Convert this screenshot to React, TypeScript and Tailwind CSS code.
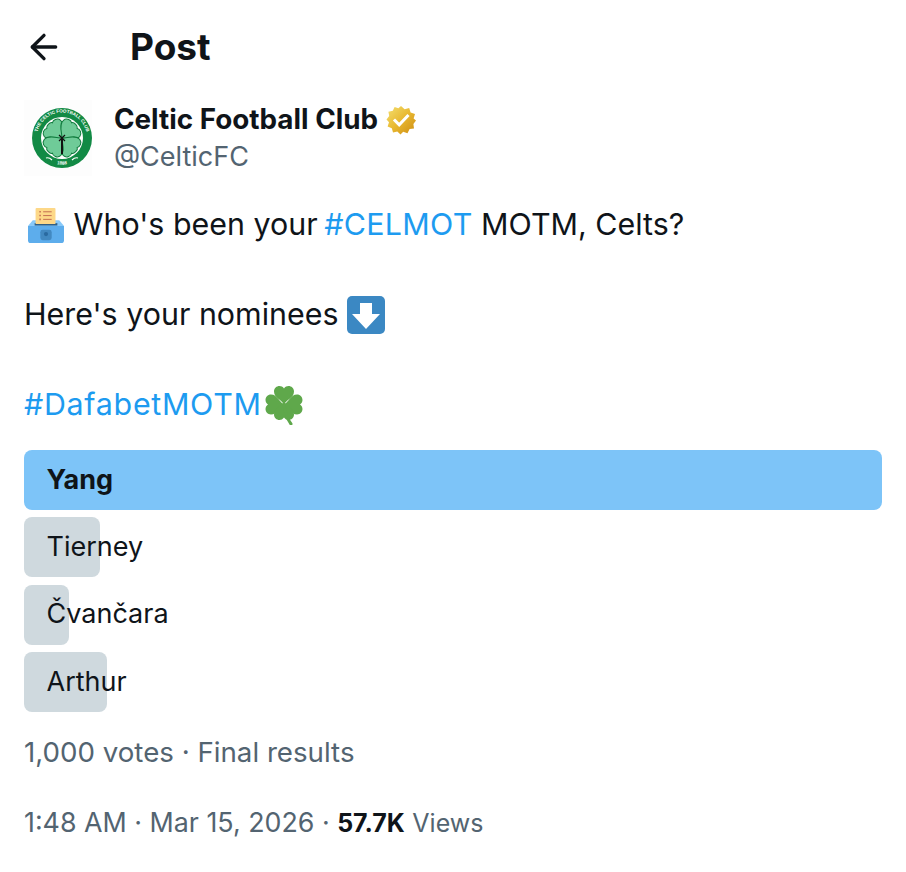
import { ArrowLeft } from 'lucide-react'

const options = [
    { label: 'Yang', width: 858, winner: true },
    { label: 'Tierney', width: 76, winner: false },
    { label: 'Čvančara', width: 45, winner: false },
    { label: 'Arthur', width: 83, winner: false },
]

function Leaf({ rotate }: { rotate: number }) {
    return (
        <path
            transform={`rotate(${rotate} 30 30)`}
            d="M30 30 C26 26 18 23 18.5 16.5 C19 12 24 11 26 12.5 C27 10 33 10 34 12.5 C36 11 41 12 41.5 16.5 C42 23 34 26 30 30 Z"
            fill="#6fcb98"
            stroke="#0f7a3c"
            strokeWidth="1"
        />
    )
}

function CelticLogo() {
    return (
        <svg viewBox="0 0 60 60" className="w-[60px] h-[60px]">
            <circle cx="30" cy="30" r="30" fill="#128a45" />
            <circle cx="30" cy="30" r="21" fill="#ffffff" />
            <defs>
                <path id="top-arc" d="M6.5 38 A25 25 0 1 1 53.5 38" />
                <path id="bottom-arc" d="M6 42 A27 27 0 0 0 54 42" />
            </defs>
            <text fontSize="4.6" fontWeight="700" fill="#ffffff" fontFamily="Liberation Sans, sans-serif" textAnchor="middle">
                <textPath href="#top-arc" startOffset="50%">THE CELTIC FOOTBALL CLUB</textPath>
            </text>
            <text fontSize="4.6" fontWeight="700" fill="#ffffff" fontFamily="Liberation Sans, sans-serif" textAnchor="middle">
                <textPath href="#bottom-arc" startOffset="50%">1888</textPath>
            </text>
            <path d="M14 50 q3 -1 6 2 M40 52 q3 -3 6 -2" stroke="#ffffff" strokeWidth="1.2" fill="none" />
            <Leaf rotate={-45} />
            <Leaf rotate={45} />
            <Leaf rotate={135} />
            <Leaf rotate={225} />
            <path d="M30 30 L30 46" stroke="#111111" strokeWidth="2" />
            <path d="M27 27 l6 6 M33 27 l-6 6" stroke="#111111" strokeWidth="1.2" />
        </svg>
    )
}

function VerifiedBadge() {
    return (
        <svg viewBox="0 0 30 30" className="w-[30px] h-[30px] shrink-0">
            <defs>
                <linearGradient id="gold" x1="0" y1="0" x2="1" y2="1">
                    <stop offset="0" stopColor="#f4e072" />
                    <stop offset="0.5" stopColor="#e8b830" />
                    <stop offset="1" stopColor="#cd8b12" />
                </linearGradient>
            </defs>
            <path
                d="M15 1 L18.6 4.2 L23.2 3 L24.6 7.5 L29 9 L27.6 13.5 L30 15.5 L27.4 19 L28 23.4 L23.6 24 L21.5 28.2 L17.2 26.8 L14.5 29.5 L11.3 26.6 L7 27.6 L5.8 23.2 L1.6 21.6 L3 17.2 L0.5 14.5 L3.2 11 L2.4 6.8 L6.8 5.8 L8.6 2 L12.4 3.2 Z"
                fill="url(#gold)"
            />
            <path d="M9 15.5 L13.2 19.8 L21.5 11" fill="none" stroke="#ffffff" strokeWidth="3" strokeLinecap="square" />
        </svg>
    )
}

function BallotEmoji() {
    return (
        <svg viewBox="0 0 40 38" className="w-[38px] h-[36px] ml-[3px] inline-block align-[-9px]">
            <path d="M1 19 L6 13 H34 L39 19 Z" fill="#88c9f9" />
            <rect x="8" y="16" width="24" height="2.5" fill="#2f5f86" />
            <rect x="9" y="0" width="21" height="17" rx="1" fill="#fdd888" />
            <path d="M13 4h1.5M13 8h1.5M13 12h1.5" stroke="#c1694f" strokeWidth="1.6" />
            <path d="M17 4h9M17 8h9M17 12h9" stroke="#c1694f" strokeWidth="1" />
            <path d="M1 19 H39 V34 Q39 37 36 37 H4 Q1 37 1 34 Z" fill="#5dadec" />
            <rect x="14" y="23" width="12" height="11" rx="2.5" fill="#4289c1" />
            <circle cx="20" cy="27.5" r="2.2" fill="#2a6aa0" />
        </svg>
    )
}

function DownEmoji() {
    return (
        <svg viewBox="0 0 38 38" className="w-[38px] h-[38px] inline-block align-[-9px]">
            <rect x="0" y="0" width="38" height="38" rx="5" fill="#3b88c3" />
            <path d="M13 7 H25 V18 H33 L19 33 L5 18 H13 Z" fill="#ffffff" />
        </svg>
    )
}

function CloverEmoji() {
    const leaf = 'M20 19.5 C18 15 10 13 10 6.5 C10 1 17 -1 20 3.5 C23 -1 30 1 30 6.5 C30 13 22 15 20 19.5 Z'
    return (
        <svg viewBox="0 0 40 40" className="w-[40px] h-[40px] ml-[2px] inline-block align-[-10px]">
            <g fill="#5fa84b">
                <path d={leaf} />
                <path d={leaf} transform="rotate(90 20 19.5)" />
                <path d={leaf} transform="rotate(-90 20 19.5)" />
                <path d={leaf} transform="rotate(180 20 19.5) translate(0 3)" />
            </g>
            <path d="M20 19 Q21 31 27 39" fill="none" stroke="#5fa84b" strokeWidth="3" strokeLinecap="round" />
        </svg>
    )
}

export default function App() {
    return (
        <div className="w-[906px] h-[872px] bg-white text-[#0f1419] px-6 font-['Inter','Liberation_Sans',sans-serif] overflow-hidden">
            {/* Header */}
            <div className="flex items-center h-[94px]">
                <ArrowLeft className="w-10 h-10 text-[#0f1419]" strokeWidth={2} />
                <h1 className="ml-[66px] text-[37px] font-bold">Post</h1>
            </div>

            {/* Author */}
            <div className="flex items-center mt-[6px]">
                <div className="w-[68px] h-[76px] flex items-center justify-center shrink-0 pl-[7px] bg-[#fdfdfd]">
                    <CelticLogo />
                </div>
                <div className="ml-[22px]">
                    <div className="flex items-center gap-2 text-[27.8px] leading-[37px] font-bold">
                        Celtic Football Club
                        <VerifiedBadge />
                    </div>
                    <div className="text-[27px] leading-[37px] text-[#536471]">@CelticFC</div>
                </div>
            </div>

            {/* Tweet text */}
            <div className="mt-[26px] text-[30.4px] leading-[45px]">
                <p>
                    <BallotEmoji /> Who's been your <span className="text-[#1d9bf0] -ml-[2px] tracking-[0.3px]">#CELMOT</span> MOTM, Celts?
                </p>
                <p className="mt-[45px]">
                    Here's your nominees <DownEmoji />
                </p>
                <p className="mt-[45px]">
                    <span className="text-[#1d9bf0] tracking-[0.7px]">#DafabetMOTM</span>
                    <CloverEmoji />
                </p>
            </div>

            {/* Poll */}
            <div className="mt-[23px] flex flex-col gap-[7.33px] w-[858px]">
                {options.map((option) => (
                    <div key={option.label} className="relative h-[60px] flex items-center px-[22.5px] text-[27px]">
                        <div
                            className={`absolute inset-y-0 left-0 rounded-lg ${option.winner ? 'bg-[#7dc4f8]' : 'bg-[#cfd9de]'}`}
                            style={{ width: option.width }}
                        />
                        <span className={`relative ${option.winner ? 'font-bold' : ''}`}>{option.label}</span>
                    </div>
                ))}
            </div>

            <div className="mt-[22.5px] text-[27.7px] leading-[37px] text-[#536471]">1,000 votes · Final results</div>

            <div className="mt-[33px] text-[26.8px] leading-[37px] text-[#536471]">
                1:48 AM · Mar 15, 2026 · <span className="font-bold text-[#0f1419] text-[25px]">57.7K</span>{' '}
                <span className="text-[25px]">Views</span>
            </div>
        </div>
    )
}
